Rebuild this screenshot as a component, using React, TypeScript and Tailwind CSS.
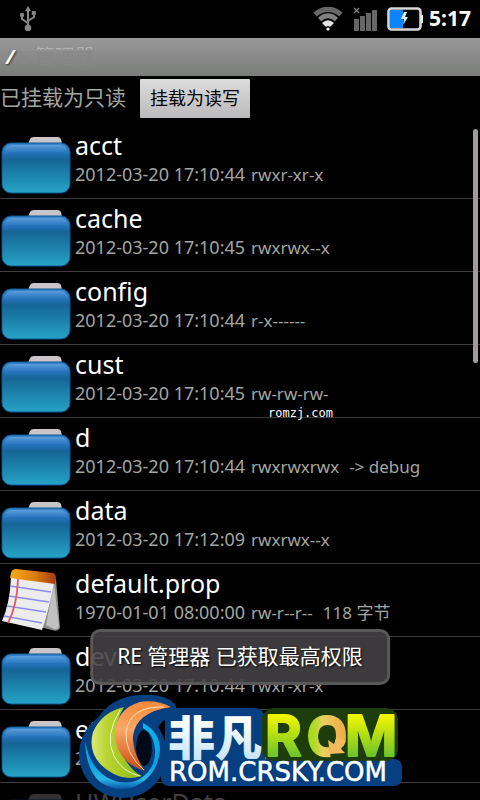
import { FC } from "react";

type Entry = {
  name: string;
  modified: string;
  mode: string;
  extra?: string;
  kind?: "file";
};

const entries: Entry[] = [
  { name: "acct", modified: "2012-03-20 17:10:44", mode: "rwxr-xr-x" },
  { name: "cache", modified: "2012-03-20 17:10:45", mode: "rwxrwx--x" },
  { name: "config", modified: "2012-03-20 17:10:44", mode: "r-x------" },
  { name: "cust", modified: "2012-03-20 17:10:45", mode: "rw-rw-rw-" },
  { name: "d", modified: "2012-03-20 17:10:44", mode: "rwxrwxrwx", extra: "-> debug" },
  { name: "data", modified: "2012-03-20 17:12:09", mode: "rwxrwx--x" },
  { name: "default.prop", modified: "1970-01-01 08:00:00", mode: "rw-r--r--", extra: "118 字节", kind: "file" },
  { name: "dev", modified: "2012-03-20 17:10:44", mode: "rwxr-xr-x" },
  { name: "etc", modified: "2012-03-20 17:10:44", mode: "rwxr-xr-x" },
  { name: "HWUserData", modified: "2012-03-20 17:10:44", mode: "rwxrwx--x" },
];

const UsbIcon: FC = () => (
  <svg width="18" height="28" viewBox="0 0 18 28" fill="none" stroke="#858585" strokeWidth="2">
    <path d="M9 22V5M9 18l-6-4V10M9 16l6-4V8" />
    <path d="M9 1l3 5H6z" fill="#858585" stroke="none" />
    <circle cx="9" cy="23" r="3.3" fill="#858585" stroke="none" />
    <circle cx="3" cy="10" r="2.2" fill="#858585" stroke="none" />
    <path d="M12.8 6h4v4h-4z" fill="#858585" stroke="none" />
  </svg>
);

const WifiIcon: FC = () => (
  <svg width="30" height="24" viewBox="0 0 30 24" fill="none">
    <path d="M2 7.5Q15-3 28 7.5" stroke="#666" strokeWidth="5.4" />
    <path d="M6.5 12.5Q15 5 23.5 12.5" stroke="#808080" strokeWidth="4.6" />
    <path d="M9 16Q15 10.500 21 16L17 20Q15 18 13 20z" fill="#e4e4e4" />
    <circle cx="15" cy="22" r="1.6" fill="#fff" />
  </svg>
);

const SignalIcon: FC = () => (
  <svg width="24" height="24" viewBox="0 0 24 24">
    <path d="M1 12h5v12H1zM7 9h5v15H7zM13 6h5v18h-5zM19 3h5v21h-5z" fill="#666" />
    <path d="M1 1l5 5M6 1L1 6" stroke="#888" strokeWidth="1.2" />
  </svg>
);

const BatteryIcon: FC = () => (
  <svg width="36" height="24" viewBox="0 0 36 24">
    <rect x="1.5" y="1.5" width="32" height="21" rx="3" fill="#050505" stroke="#d8d8d8" strokeWidth="2.6" />
    <path d="M34 8h2v8h-2z" fill="#eee" />
    <path d="M3 3h13v18H3z" fill="#0a84ff" />
    <path d="M17 5l-3 7h3l-1 6 5-8h-3l2-5z" fill="#dceeff" />
  </svg>
);

const FolderIcon: FC = () => (
  <svg width="72" height="60" viewBox="0 0 72 60" className="block">
    <defs>
      <linearGradient id="folder" x1="0" y1="0" x2="0" y2="1">
        <stop offset="0" stopColor="#3a86cc" />
        <stop offset=".2" stopColor="#2472bb" />
        <stop offset=".32" stopColor="#156596" />
        <stop offset="1" stopColor="#26a3c6" />
      </linearGradient>
      <linearGradient id="gloss" x1="0" y1="0" x2="0" y2="1">
        <stop offset="0" stopColor="#5c9edb" />
        <stop offset="1" stopColor="#2472bb" stopOpacity=".3" />
      </linearGradient>
    </defs>
    <path d="M28 10l2-5q1-2 4-2h23q3 0 4 2l1 5z" fill="#c9c5c8" />
    <rect x="2" y="9" width="68" height="50" rx="9" fill="url(#folder)" stroke="#0b5795" strokeWidth="1" />
    <path d="M4 21v-3q1-7 8-7h48q7 0 8 7v3q-1-3-7-3H11q-6 0-7 3z" fill="url(#gloss)" />
  </svg>
);

const FileIcon: FC = () => (
  <svg width="72" height="66" viewBox="0 0 72 66" className="block">
    <defs>
      <linearGradient id="binding" x1="0" y1="0" x2="1" y2="0">
        <stop offset="0" stopColor="#f6a81c" />
        <stop offset=".55" stopColor="#db7b0b" />
        <stop offset="1" stopColor="#a03a10" />
      </linearGradient>
    </defs>
    <path d="M53 10l3 1 4 49q-2 4-8 2l-12-3z" fill="#8c8c8c" />
    <path d="M54 16l5 42q-1 4-5 3l-8-4z" fill="#c0c0c0" />
    <path d="M11 9l43 6Q49 42 42 62L2 53Q10 35 11 9z" fill="#ececec" />
    <path d="M11 5q1-4 5-4l37 4q3 1 3 5l-1 6-45-6z" fill="url(#binding)" />
    <path d="M10 18l41 6M9 28l40 6M7 38l39 6M4 48l38 7" stroke="#8c8de8" strokeWidth="1.5" fill="none" />
    <path d="M18 11Q17 38 8 55" stroke="#ec5660" strokeWidth="1.8" fill="none" />
  </svg>
);

const Logo: FC = () => (
  <svg width="324" height="106" viewBox="0 0 324 106" className="block" role="img" aria-label="非凡ROM">
    <defs>
      <linearGradient id="lime" x1="0" y1="0" x2="1" y2="0">
        <stop offset="0" stopColor="#dbe87a" />
        <stop offset=".3" stopColor="#b9d532" />
        <stop offset="1" stopColor="#86b81d" />
      </linearGradient>
      <linearGradient id="orange" x1="0" y1="0" x2="0" y2="1">
        <stop offset="0" stopColor="#f58a3c" />
        <stop offset=".4" stopColor="#fba765" />
        <stop offset="1" stopColor="#cc4a10" />
      </linearGradient>
      <linearGradient id="ring" x1="0" y1="0" x2="0" y2="1">
        <stop offset="0" stopColor="#08b4ee" />
        <stop offset=".6" stopColor="#0c9edf" />
        <stop offset=".85" stopColor="#27b7e8" />
        <stop offset="1" stopColor="#0b52a4" />
      </linearGradient>
      <linearGradient id="ice" x1="0" y1="0" x2="0" y2="1">
        <stop offset=".3" stopColor="#fff" />
        <stop offset="1" stopColor="#b8def6" />
      </linearGradient>
      <linearGradient id="acid" x1="0" y1="0" x2="0" y2="1">
        <stop offset=".2" stopColor="#f2f600" />
        <stop offset=".8" stopColor="#6cc32b" />
      </linearGradient>
      <linearGradient id="gold" x1="0" y1="0" x2="1" y2="0">
        <stop offset="0" stopColor="#a8dc1c" />
        <stop offset=".35" stopColor="#e8d060" />
        <stop offset="1" stopColor="#eeb04a" />
      </linearGradient>
    </defs>
    <g fill="#074080">
      <circle cx="45" cy="60" r="44" />
      <path d="M18 26Q34 2 62 1q24-2 35 9 5 10-8 15-12 4-10 22z" />
      <rect x="87" y="14" width="100" height="60" rx="10" />
      <rect x="83" y="65" width="241" height="27" rx="8" />
    </g>
    <rect x="184" y="14" width="136" height="53" rx="12" fill="#1d3d0c" />
    <ellipse cx="66" cy="54" rx="8" ry="18" fill="#020a18" />
    <path
      d="M65 29Q82 38 82 56 80 82 56 93 38 99 22 88 8 76 7 47 12 74 30 84 46 92 60 86 78 76 77 56 76 40 65 34z"
      fill="url(#ring)"
    />
    <path d="M46 13Q24 18 15 38 8 64 34 79 48 87 64 82 54 78 45 62 30 40 46 13z" fill="url(#lime)" />
    <path d="M42 16Q26 42 36 62 44 78 62 82" stroke="#f0f8b8" strokeWidth="1" fill="none" />
    <path d="M93 13Q78 5 62 8 38 15 37 40 38 68 67 77 54 58 55 42 58 18 93 13z" fill="url(#orange)" />
    <path d="M86 13Q52 12 48 38 47 60 66 76" stroke="#ffdfb8" strokeWidth="1" fill="none" />
    <text x="90" y="61" fontSize="47" fontWeight="900" fill="url(#ice)" className="font-['Noto_Sans_CJK_SC',sans-serif]">
      非凡
    </text>
    <g
      fontSize="56"
      fontWeight="700"
      fill="url(#acid)"
      stroke="url(#acid)"
      strokeWidth="2"
      strokeLinejoin="round"
      className="font-['Inter','Liberation_Sans',sans-serif]"
    >
      <text x="187" y="62">R</text>
      <text x="267" y="62">M</text>
    </g>
    <path d="M252 58Q236 60 235 42 236 26 249 26 263 26 263 42 263 47 261 50" fill="none" stroke="url(#gold)" strokeWidth="10" />
    <path d="M250 46l2 14 15-1-4-4 5-8-9-4-3 7z" fill="#f0ba5c" />
    <text
      x="91"
      y="87"
      fontSize="26"
      fill="#fff"
      stroke="#fff"
      strokeWidth=".5"
      className="font-['DejaVu_Sans',sans-serif]"
    >
      ROM.CRSKY.COM
    </text>
  </svg>
);

const EntryRow: FC<{ entry: Entry }> = ({ entry }) => (
  <li className="flex h-[73px] shrink-0 border-b border-[#3c3c3e]">
    {entry.kind === "file" ? (
      <div className="w-[75px] shrink-0 pt-1">
        <FileIcon />
      </div>
    ) : (
      <div className="w-[75px] shrink-0 pt-2">
        <FolderIcon />
      </div>
    )}
    <div className="min-w-0 whitespace-pre">
      <p className="h-9 text-[25px] leading-[38px] text-white">{entry.name}</p>
      <p className="flex items-baseline gap-[10px] text-[17px] leading-6 text-[#a2a6a0]">
        <span className="w-[166px] text-[18px]">{entry.modified}</span>
        <span>{entry.mode}</span>
        {entry.extra && <span>{entry.extra}</span>}
      </p>
    </div>
  </li>
);

const App: FC = () => {
  return (
    <div className="relative flex h-screen flex-col overflow-hidden bg-black font-['Noto_Sans','Noto_Sans_CJK_SC',sans-serif]">
      <header className="flex h-[38px] shrink-0 items-center pr-[9px] pl-[19px]">
        <UsbIcon />
        <div className="ml-auto flex items-center">
          <WifiIcon />
          <div className="ml-[10px]">
            <SignalIcon />
          </div>
          <div className="ml-[10px]">
            <BatteryIcon />
          </div>
          <span className="ml-[6px] text-[21px] font-bold text-white">5:17</span>
        </div>
      </header>

      {/* the old title fades out under the current path */}
      <div className="grid h-[38px] shrink-0 items-center bg-linear-to-b from-[#989898] to-[#7b7d7b] pl-[6px]">
        <span className="col-start-1 row-start-1 justify-self-start bg-linear-to-b from-[#b0b0b0] from-24% to-[#868886] to-30% bg-clip-text text-[20px] text-transparent">
          RE 管理器
        </span>
        <h1 className="col-start-1 row-start-1 text-[20px] font-bold text-white italic [text-shadow:1px_1px_2px_#333]">/</h1>
      </div>

      <div className="flex h-[50px] shrink-0 items-center pb-[6px]">
        <span className="text-[21px] text-[#a2a6a0]">已挂载为只读</span>
        <button
          type="button"
          className="ml-[14px] h-[39px] rounded-[1px] bg-linear-to-b from-[#dcdcdc] to-[#bcbabc] px-[10px] text-[18px] text-black"
        >
          挂载为读写
        </button>
      </div>

      <main className="relative min-h-0 flex-1 overflow-hidden">
        <ul className="flex flex-col">
          {entries.map((entry) => (
            <EntryRow key={entry.name} entry={entry} />
          ))}
        </ul>
        <div className="absolute inset-x-0 bottom-0 h-4 bg-black/75" />
        <div className="absolute top-[3px] right-[2px] h-[234px] w-[5px] rounded-full bg-[#a09c9e]" />
      </main>

      <span className="absolute top-[405px] left-[268px] font-['DejaVu_Sans_Mono',monospace] text-[12px] leading-4 text-white">
        romzj.com
      </span>
      <div className="absolute bottom-0 left-1/2 -translate-x-1/2">
        <Logo />
      </div>
      <div
        role="status"
        className="absolute bottom-[115px] left-1/2 flex h-[56px] -translate-x-1/2 items-center rounded-[10px] border-3 border-[#5c5c5c]/90 bg-[#424042]/90 px-6 text-[21px] whitespace-nowrap text-white [text-shadow:1px_1px_2px_#000]"
      >
        RE 管理器 已获取最高权限
      </div>
    </div>
  );
};

export default App;
